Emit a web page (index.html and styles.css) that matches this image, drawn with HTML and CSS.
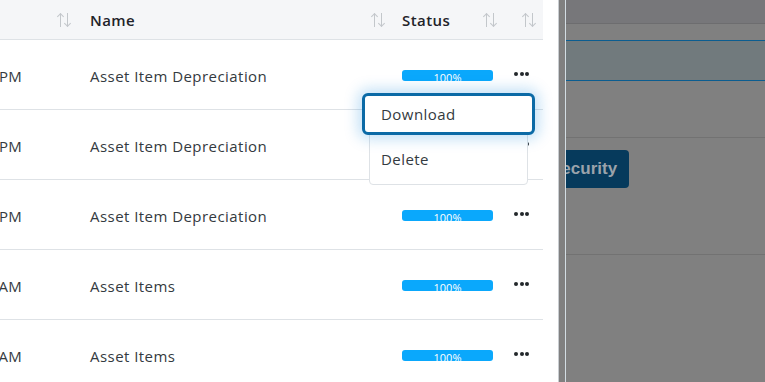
FILE: index.html
```html
<!DOCTYPE html>
<html lang="en">
<head>
  <meta charset="UTF-8" />
  <meta name="viewport" content="width=device-width, initial-scale=1.0" />
  <title>Exports</title>
  <link rel="stylesheet" href="styles.css">
</head>
<body>
  <!-- ===== EXPORT PANEL ===== -->
  <aside class="panel">
    <div class="table">
      <div class="row head">
        <div class="cell c-date"><span class="sort"></span></div>
        <div class="cell c-name">Name<span class="sort"></span></div>
        <div class="cell c-status">Status<span class="sort"></span></div>
        <div class="cell c-act"><span class="sort"></span></div>
      </div>

      <div class="row">
        <div class="cell c-date"><div class="clip"><span>12/04/2024 03:41 PM</span></div></div>
        <div class="cell c-name">Asset Item Depreciation</div>
        <div class="cell c-status"><div class="bar">100%</div></div>
        <div class="cell c-act">
          <span class="dots"><i></i><i></i><i></i></span>
          <div class="menu">
            <a class="menu-item focus" href="#">Download</a>
            <a class="menu-item" href="#">Delete</a>
          </div>
        </div>
      </div>
      <div class="row">
        <div class="cell c-date"><div class="clip"><span>12/04/2024 03:12 PM</span></div></div>
        <div class="cell c-name">Asset Item Depreciation</div>
        <div class="cell c-status"><div class="bar">100%</div></div>
        <div class="cell c-act"><span class="dots"><i></i><i></i><i></i></span></div>
      </div>
      <div class="row">
        <div class="cell c-date"><div class="clip"><span>12/04/2024 01:58 PM</span></div></div>
        <div class="cell c-name">Asset Item Depreciation</div>
        <div class="cell c-status"><div class="bar">100%</div></div>
        <div class="cell c-act"><span class="dots"><i></i><i></i><i></i></span></div>
      </div>
      <div class="row">
        <div class="cell c-date"><div class="clip"><span>12/04/2024 10:20 AM</span></div></div>
        <div class="cell c-name">Asset Items</div>
        <div class="cell c-status"><div class="bar">100%</div></div>
        <div class="cell c-act"><span class="dots"><i></i><i></i><i></i></span></div>
      </div>
      <div class="row">
        <div class="cell c-date"><div class="clip"><span>12/04/2024 09:05 AM</span></div></div>
        <div class="cell c-name">Asset Items</div>
        <div class="cell c-status"><div class="bar">100%</div></div>
        <div class="cell c-act"><span class="dots"><i></i><i></i><i></i></span></div>
      </div>
    </div>
  </aside>

  <!-- ===== DIMMED PAGE ===== -->
  <main class="page">
    <div class="gutter"></div>
    <div class="content">
      <div class="p-head"></div>
      <div class="p-gap"></div>
      <div class="p-selected"></div>
      <div class="p-block"></div>
      <div class="p-actions"><span class="btn">Security</span></div>
    </div>
  </main>
</body>
</html>
```

FILE: styles.css
```css
:root {
  --text: #343a40;
  --head: #1f2329;
  --line: #dee2e6;
  --blue: #0aa8fc;
  --focus: #0b6aa6;
  --dim: #808080;
}
* { box-sizing: border-box; margin: 0; padding: 0; }

body {
  font-family: "Open Sans", "Noto Sans", Arial, sans-serif;
  letter-spacing: 0.45px;
  color: var(--text);
  display: flex;
  height: 100vh;
  overflow: hidden;
  background: var(--dim);
}

/* ===== PANEL ===== */
.panel {
  width: 559px;
  flex-shrink: 0;
  background: #ffffff;
  padding-right: 16px;
  border-right: 1px solid #c9cdd1;
}
.table { width: 543px; }

.row {
  display: flex;
  height: 70px;
  align-items: center;
  border-bottom: 1px solid var(--line);
  font-size: 15px;
}
.row:not(.head) .cell { padding-top: 2px; }
.row.head {
  height: 40px;
  background: #f5f6f8;
  font-weight: 600;
  color: var(--head);
}

.cell { display: flex; align-items: center; height: 100%; }
.c-date { width: 76px; padding-right: 5px; justify-content: flex-end; }
.c-name { width: 314px; padding: 0 5px 0 14px; justify-content: space-between; }
.c-status { width: 112px; padding: 0 5px 0 12px; justify-content: space-between; }
.c-act { width: 41px; padding-right: 7px; justify-content: flex-end; position: relative; }

.row:not(.head) .c-date { padding-left: 0; padding-right: 0; justify-content: flex-start; }
.row:not(.head) .c-act { justify-content: flex-start; padding-left: 12px; }

/* date column scrolled off to the left */
.clip {
  width: 22px;
  display: flex;
  justify-content: flex-end;
  overflow: hidden;
  white-space: nowrap;
  letter-spacing: 0.3px;
}

/* sort arrows */
.sort {
  width: 14px;
  height: 16px;
  background:
    linear-gradient(#c3c7cb, #c3c7cb) 3px 2px / 1px 13px no-repeat,
    linear-gradient(#c3c7cb, #c3c7cb) 10px 1px / 1px 13px no-repeat;
  position: relative;
}
.sort::before, .sort::after {
  content: "";
  position: absolute;
  width: 4px;
  height: 4px;
  border: solid #c3c7cb;
}
.sort::before { left: 1px; top: 2px; border-width: 1px 0 0 1px; transform: rotate(45deg); }
.sort::after { left: 8px; bottom: 2px; border-width: 0 1px 1px 0; transform: rotate(45deg); }

/* progress */
.bar {
  width: 91px;
  height: 11px;
  border-radius: 3px;
  background: var(--blue);
  color: #ffffff;
  font-size: 11px;
  line-height: 16px;
  letter-spacing: 0;
  text-align: center;
  overflow: hidden;
  font-weight: 400;
}

/* action dots */
.dots { display: flex; gap: 1.5px; margin-top: -3px; }
.dots i { width: 4px; height: 4px; border-radius: 50%; background: #23272b; }

/* ===== DROPDOWN ===== */
.menu {
  position: absolute;
  top: 53px;
  right: 15px;
  width: 159px;
  background: #ffffff;
  border: 1px solid var(--line);
  border-radius: 4px;
  z-index: 10;
  display: flex;
  flex-direction: column;
}
.menu-item {
  display: block;
  padding: 0 11px;
  height: 49px;
  line-height: 49px;
  color: var(--text);
  text-decoration: none;
  font-size: 15px;
}
.menu-item.focus {
  height: 42px;
  line-height: 36px;
  margin: -1px -8px 0;
  padding: 0 16px;
  background: #ffffff;
  border: 3px solid var(--focus);
  border-radius: 6px;
  box-shadow: 0 0 14px 4px rgba(13, 130, 220, 0.25);
}

/* ===== DIMMED PAGE ===== */
.page { flex: 1; display: flex; background: var(--dim); }
.gutter { width: 7px; border-right: 1px solid #d3dde3; }
.content { flex: 1; display: flex; flex-direction: column; }
.p-head { height: 24px; background: #77777a; border-bottom: 1px solid #6d6d6f; }
.p-gap { height: 16px; }
.p-selected {
  height: 41px;
  background: #717a7d;
  border-top: 1px solid #0b5d90;
  border-bottom: 1px solid #0b5d90;
}
.p-block { height: 57px; border-bottom: 1px solid #727272; }
.p-actions {
  height: 117px;
  padding-top: 12px;
  border-bottom: 1px solid #727272;
  overflow: hidden;
}
.btn {
  display: inline-flex;
  align-items: center;
  height: 38px;
  margin-left: -28px;
  padding: 0 12px;
  background: #063a5c;
  color: #9ba3ab;
  border-radius: 4px;
  font-family: "Liberation Sans", Arial, sans-serif;
  font-weight: 700;
  font-size: 17px;
  letter-spacing: 0;
}
```
